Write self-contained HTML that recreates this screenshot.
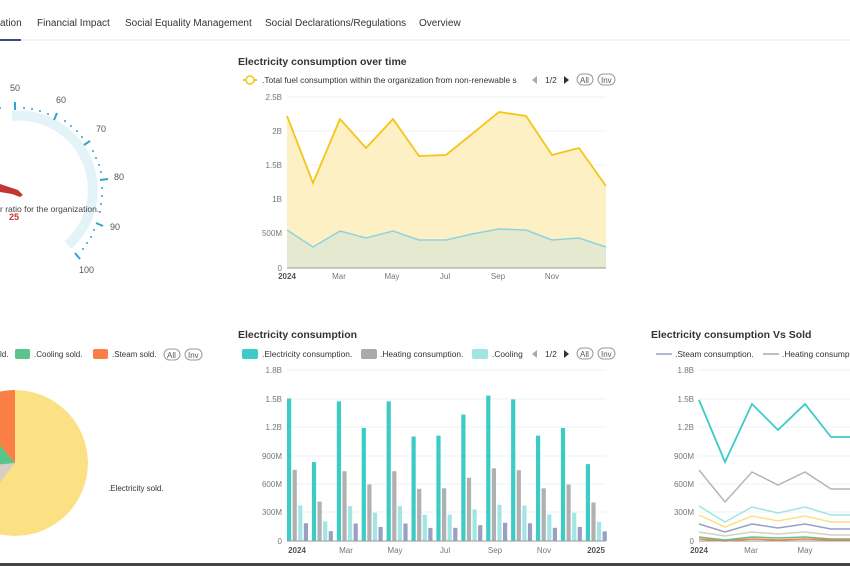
<!DOCTYPE html>
<html><head><meta charset="utf-8"><style>
body{margin:0;width:850px;height:566px;overflow:hidden;background:#fff;font-family:"Liberation Sans",sans-serif;position:relative}
svg{position:absolute;left:0;top:0}
svg text{font-family:"Liberation Sans",sans-serif}
</style></head><body>
<svg width="850" height="566" viewBox="0 0 850 566" xmlns="http://www.w3.org/2000/svg">
<defs><clipPath id="pc"><circle cx="15" cy="463" r="73"/></clipPath></defs>
<g font-size="10" fill="#333">
<text x="0" y="26">ation</text>
<text x="37" y="26">Financial Impact</text>
<text x="125" y="26">Social Equality Management</text>
<text x="265" y="26">Social Declarations/Regulations</text>
<text x="419" y="26">Overview</text>
</g>
<rect x="0" y="39" width="850" height="2" fill="#f1f3f6"/>
<rect x="0" y="39" width="21" height="2" fill="#3b4a7a"/>

<!-- gauge -->
<path d="M 12 116 A 74 74 0 0 1 68 245" fill="none" stroke="#e4f3f8" stroke-width="10"/>
<g stroke="#2aa7c9" stroke-width="2">
<line x1="15" y1="102" x2="15" y2="110"/>
<line x1="57" y1="113" x2="54" y2="120"/>
<line x1="90" y1="141" x2="84" y2="145"/>
<line x1="108" y1="179" x2="100" y2="180"/>
<line x1="103" y1="226" x2="96" y2="223"/>
<line x1="80" y1="259" x2="75" y2="253"/>
</g>
<g fill="#2aa7c9">
<circle cx="0" cy="108" r="1"/><circle cx="24" cy="108" r="1"/><circle cx="32" cy="109" r="1"/><circle cx="40" cy="111" r="1"/><circle cx="48" cy="114" r="1"/>
<circle cx="65" cy="121" r="1"/><circle cx="71" cy="126" r="1"/><circle cx="77" cy="131" r="1"/><circle cx="82" cy="137" r="1"/>
<circle cx="93" cy="151" r="1"/><circle cx="96" cy="158" r="1"/><circle cx="99" cy="165" r="1"/><circle cx="101" cy="172" r="1"/>
<circle cx="102" cy="188" r="1"/><circle cx="102" cy="196" r="1"/><circle cx="101" cy="204" r="1"/><circle cx="100" cy="212" r="1"/>
<circle cx="94" cy="230" r="1"/><circle cx="91" cy="237" r="1"/><circle cx="87" cy="243" r="1"/><circle cx="83" cy="249" r="1"/>
</g>
<g font-size="9" fill="#555">
<text x="10" y="91">50</text><text x="56" y="103">60</text><text x="96" y="132">70</text>
<text x="114" y="180">80</text><text x="110" y="230">90</text><text x="79" y="273">100</text>
</g>
<polygon points="0,184 12,188 18,190 23,195 20,197 12,194 0,192" fill="#c23531"/>
<text x="0" y="212" font-size="8.5" fill="#444">r ratio for the organization.</text>
<text x="9" y="220" font-size="9" font-weight="bold" fill="#c23531">25</text>

<!-- chart 1 -->
<text x="238" y="65" font-size="10.5" font-weight="bold" fill="#333">Electricity consumption over time</text>
<line x1="243" y1="80" x2="257" y2="80" stroke="#f5c518" stroke-width="2"/>
<circle cx="250" cy="80" r="4" fill="#fff" stroke="#f5c518" stroke-width="1.5"/>
<text x="262" y="83" font-size="8.4" fill="#333">.Total fuel consumption within the organization from non-renewable s</text>
<polygon points="532,80 537,76 537,84" fill="#aaa"/>
<text x="545" y="83" font-size="8.5" fill="#333">1/2</text>
<polygon points="569,80 564,76 564,84" fill="#333"/>
<rect x="577" y="74" width="16" height="11" rx="5.5" fill="none" stroke="#999"/><text x="580" y="83" font-size="8" fill="#555">All</text>
<rect x="598" y="74" width="17" height="11" rx="5.5" fill="none" stroke="#999"/><text x="601" y="83" font-size="8" fill="#555">Inv</text>
<g stroke="#eef1f7"><line x1="287" y1="97" x2="606" y2="97"/><line x1="287" y1="131" x2="606" y2="131"/><line x1="287" y1="165" x2="606" y2="165"/><line x1="287" y1="199" x2="606" y2="199"/><line x1="287" y1="233" x2="606" y2="233"/></g>
<g font-size="8" fill="#777" text-anchor="end"><text x="282" y="100">2.5B</text><text x="282" y="134">2B</text><text x="282" y="168">1.5B</text><text x="282" y="202">1B</text><text x="282" y="236">500M</text><text x="282" y="271">0</text></g>
<polygon points="287,116 313,183 340,119 366,148 393,119 419,156 446,155 472,134 499,112 526,116 552,155 579,148 606,186 606,268 287,268" fill="#fcf0c4"/>
<polyline points="287,116 313,183 340,119 366,148 393,119 419,156 446,155 472,134 499,112 526,116 552,155 579,148 606,186" fill="none" stroke="#f5c518" stroke-width="1.8"/>
<polygon points="287,230 313,247 340,231 366,238 393,231 419,240 446,240 472,234 499,229 526,230 552,240 579,238 606,247 606,268 287,268" fill="#e4e9cf"/>
<polyline points="287,230 313,247 340,231 366,238 393,231 419,240 446,240 472,234 499,229 526,230 552,240 579,238 606,247" fill="none" stroke="#8fd3e0" stroke-width="1.5"/>
<line x1="287" y1="268" x2="606" y2="268" stroke="#999"/>
<g font-size="8" fill="#777" text-anchor="middle"><text x="287" y="279" font-weight="bold" fill="#555">2024</text><text x="339" y="279">Mar</text><text x="392" y="279">May</text><text x="445" y="279">Jul</text><text x="498" y="279">Sep</text><text x="552" y="279">Nov</text></g>

<!-- pie -->
<text x="0" y="357" font-size="8" fill="#333">ld.</text>
<rect x="15" y="349" width="15" height="10" rx="2" fill="#5bc48a"/><text x="34" y="357" font-size="8" fill="#333">.Cooling sold.</text>
<rect x="93" y="349" width="15" height="10" rx="2" fill="#fb7f45"/><text x="112" y="357" font-size="8" fill="#333">.Steam sold.</text>
<rect x="164" y="349" width="16" height="11" rx="5.5" fill="none" stroke="#999"/><text x="167" y="358" font-size="8" fill="#555">All</text>
<rect x="185" y="349" width="17" height="11" rx="5.5" fill="none" stroke="#999"/><text x="188" y="358" font-size="8" fill="#555">Inv</text>
<g clip-path="url(#pc)">
<circle cx="15" cy="463" r="73" fill="#fbe183"/>
<polygon points="15,463 -60,560 -60,380" fill="#d8cfc4"/>
<polygon points="15,463 -60,470 -60,373" fill="#5bc48a"/>
<polygon points="15,463 -60,373 -60,300 15,300" fill="#fb7f45"/>
</g>
<text x="108" y="491" font-size="8" fill="#333">.Electricity sold.</text>

<!-- chart 3 -->
<text x="238" y="338" font-size="10.5" font-weight="bold" fill="#333">Electricity consumption</text>
<rect x="242" y="349" width="16" height="10" rx="2" fill="#3dcbc6"/><text x="262" y="357" font-size="8.4" fill="#333">.Electricity consumption.</text>
<rect x="361" y="349" width="16" height="10" rx="2" fill="#aaa"/><text x="380" y="357" font-size="8.4" fill="#333">.Heating consumption.</text>
<rect x="472" y="349" width="16" height="10" rx="2" fill="#a2e5e5"/><text x="492" y="357" font-size="8.4" fill="#333">.Cooling</text>
<polygon points="532,354 537,350 537,358" fill="#aaa"/>
<text x="545" y="357" font-size="8.5" fill="#333">1/2</text>
<polygon points="569,354 564,350 564,358" fill="#333"/>
<rect x="577" y="348" width="16" height="11" rx="5.5" fill="none" stroke="#999"/><text x="580" y="357" font-size="8" fill="#555">All</text>
<rect x="598" y="348" width="17" height="11" rx="5.5" fill="none" stroke="#999"/><text x="601" y="357" font-size="8" fill="#555">Inv</text>
<g stroke="#eef1f7"><line x1="287" y1="370" x2="606" y2="370"/><line x1="287" y1="399" x2="606" y2="399"/><line x1="287" y1="427" x2="606" y2="427"/><line x1="287" y1="456" x2="606" y2="456"/><line x1="287" y1="484" x2="606" y2="484"/><line x1="287" y1="512" x2="606" y2="512"/></g>
<g font-size="8" fill="#777" text-anchor="end"><text x="282" y="373">1.8B</text><text x="282" y="402">1.5B</text><text x="282" y="430">1.2B</text><text x="282" y="459">900M</text><text x="282" y="487">600M</text><text x="282" y="515">300M</text><text x="282" y="544">0</text></g>
<g id="bars"></g>
<line x1="287" y1="541" x2="606" y2="541" stroke="#999"/>
<g font-size="8" fill="#777" text-anchor="middle"><text x="297" y="553" font-weight="bold" fill="#555">2024</text><text x="346" y="553">Mar</text><text x="395" y="553">May</text><text x="445" y="553">Jul</text><text x="495" y="553">Sep</text><text x="544" y="553">Nov</text><text x="596" y="553" font-weight="bold" fill="#555">2025</text></g>

<!-- chart 4 -->
<text x="651" y="338" font-size="10.5" font-weight="bold" fill="#333">Electricity consumption Vs Sold</text>
<line x1="656" y1="354" x2="672" y2="354" stroke="#96a0c8" stroke-width="1.5"/><text x="675" y="357" font-size="8.4" fill="#333">.Steam consumption.</text>
<line x1="763" y1="354" x2="779" y2="354" stroke="#aaa" stroke-width="1.5"/><text x="782" y="357" font-size="8.4" fill="#333">.Heating consump</text>
<g stroke="#eef1f7"><line x1="699" y1="370" x2="850" y2="370"/><line x1="699" y1="399" x2="850" y2="399"/><line x1="699" y1="427" x2="850" y2="427"/><line x1="699" y1="456" x2="850" y2="456"/><line x1="699" y1="484" x2="850" y2="484"/><line x1="699" y1="512" x2="850" y2="512"/></g>
<g font-size="8" fill="#777" text-anchor="end"><text x="694" y="373">1.8B</text><text x="694" y="402">1.5B</text><text x="694" y="430">1.2B</text><text x="694" y="459">900M</text><text x="694" y="487">600M</text><text x="694" y="515">300M</text><text x="694" y="544">0</text></g>
<g fill="none" stroke-width="1.5">
<polyline stroke="#3dcbc6" stroke-width="1.8" points="699,400 725,462 752,404 778,430 805,404 831,437 857,437"/>
<polyline stroke="#b5b5b5" points="699,470 725,502 752,472 778,485 805,472 831,489 857,489"/>
<polyline stroke="#a2e5e5" points="699,506 725,522 752,507 778,513 805,507 831,515 857,515"/>
<polyline stroke="#fbe183" points="699,515 725,527 752,516 778,521 805,516 831,522 857,522"/>
<polyline stroke="#96a0c8" points="699,524 725,532 752,524 778,528 805,524 831,529 857,529"/>
<polyline stroke="#d8cfc4" points="699,532 725,536 752,532 778,534 805,532 831,535 857,535"/>
<polyline stroke="#5bc48a" points="699,537 725,540 752,537 778,538 805,537 831,539 857,539"/>
<polyline stroke="#fb7f45" points="699,539 725,541 752,539 778,540 805,539 831,540 857,540"/>
</g>
<line x1="699" y1="541" x2="850" y2="541" stroke="#999"/>
<g font-size="8" fill="#777" text-anchor="middle"><text x="699" y="553" font-weight="bold" fill="#555">2024</text><text x="751" y="553">Mar</text><text x="805" y="553">May</text></g>

<rect x="0" y="563" width="850" height="3" fill="#444"/>
</svg>
<script>
var t=[1.5,0.83,1.47,1.19,1.47,1.1,1.11,1.33,1.53,1.49,1.11,1.19,0.81];
var s='',c=['#3dcbc6','#b0b0b0','#a2e5e5','#9aa0c4'],f=[1,0.5,0.25,0.125];
for(var i=0;i<13;i++){for(var k=0;k<4;k++){var v=t[i]*f[k];var h=v*95;var x=287+i*24.9+k*5.6;s+='<rect x="'+x.toFixed(1)+'" y="'+(541-h).toFixed(1)+'" width="4.2" height="'+h.toFixed(1)+'" fill="'+c[k]+'"/>';}}
document.getElementById('bars').innerHTML=s;
</script>
</body></html>
